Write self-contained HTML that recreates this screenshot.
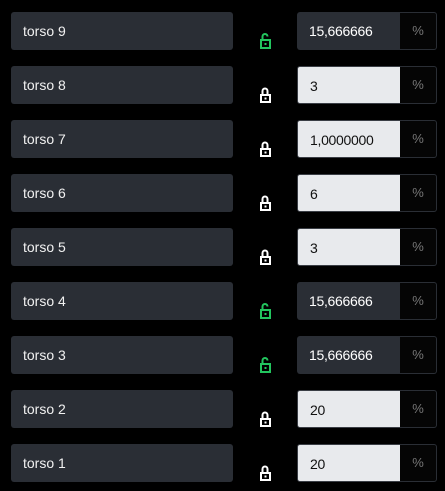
<!DOCTYPE html>
<html><head><style>
html,body{margin:0;padding:0;background:#000;width:445px;height:491px;overflow:hidden;font-family:"Liberation Sans",sans-serif;}
.row{position:absolute;left:0;width:445px;height:38px;}
.name{position:absolute;left:11px;top:0;width:222px;height:38px;background:#2a2e35;border-radius:3px;color:#f1f1f1;font-size:14px;line-height:38px;box-sizing:border-box;padding-left:12px;}
.lock{position:absolute;left:258px;top:19px;width:14px;height:18px;}
.inp{position:absolute;left:297px;top:0;width:104px;height:38px;box-sizing:border-box;border-radius:3px 0 0 3px;font-size:14px;line-height:38px;padding-left:12px;overflow:hidden;white-space:nowrap;}
.inp span{display:inline-block;width:66px;overflow:hidden;vertical-align:top;letter-spacing:-0.3px;}
.light{background:#e8eaed;color:#111;border:1px solid #3a3e45;}
.dark{background:#2a2e35;color:#fff;}
.suf{position:absolute;left:400px;top:0;width:37px;height:38px;box-sizing:border-box;border:1px solid #2a2e35;border-left:none;border-radius:0 3px 3px 0;color:#777;font-size:13px;line-height:36px;text-align:center;background:#050505;}
</style></head><body>
<div class="row" style="top:12px"><div class="name">torso 9</div><svg class="lock" viewBox="0 0 14 18"><path d="M4.5 9V5.5a2.5 2.5 0 0 1 5 0" fill="none" stroke="#22c55e" stroke-width="2"/><rect x="3" y="9" width="9" height="8" fill="none" stroke="#22c55e" stroke-width="2"/><rect x="6.5" y="12" width="2" height="2" fill="#22c55e"/></svg><div class="inp dark"><span>15,666666</span></div><div class="suf">%</div></div>
<div class="row" style="top:66px"><div class="name">torso 8</div><svg class="lock" viewBox="0 0 14 18"><path d="M4.5 10V6a2.5 2.5 0 0 1 5 0V10" fill="none" stroke="#fff" stroke-width="2"/><rect x="3" y="10" width="9" height="7" fill="none" stroke="#fff" stroke-width="2"/><rect x="6.5" y="12.5" width="2" height="2" fill="#fff"/></svg><div class="inp light"><span>3</span></div><div class="suf">%</div></div>
<div class="row" style="top:120px"><div class="name">torso 7</div><svg class="lock" viewBox="0 0 14 18"><path d="M4.5 10V6a2.5 2.5 0 0 1 5 0V10" fill="none" stroke="#fff" stroke-width="2"/><rect x="3" y="10" width="9" height="7" fill="none" stroke="#fff" stroke-width="2"/><rect x="6.5" y="12.5" width="2" height="2" fill="#fff"/></svg><div class="inp light"><span>1,0000000</span></div><div class="suf">%</div></div>
<div class="row" style="top:174px"><div class="name">torso 6</div><svg class="lock" viewBox="0 0 14 18"><path d="M4.5 10V6a2.5 2.5 0 0 1 5 0V10" fill="none" stroke="#fff" stroke-width="2"/><rect x="3" y="10" width="9" height="7" fill="none" stroke="#fff" stroke-width="2"/><rect x="6.5" y="12.5" width="2" height="2" fill="#fff"/></svg><div class="inp light"><span>6</span></div><div class="suf">%</div></div>
<div class="row" style="top:228px"><div class="name">torso 5</div><svg class="lock" viewBox="0 0 14 18"><path d="M4.5 10V6a2.5 2.5 0 0 1 5 0V10" fill="none" stroke="#fff" stroke-width="2"/><rect x="3" y="10" width="9" height="7" fill="none" stroke="#fff" stroke-width="2"/><rect x="6.5" y="12.5" width="2" height="2" fill="#fff"/></svg><div class="inp light"><span>3</span></div><div class="suf">%</div></div>
<div class="row" style="top:282px"><div class="name">torso 4</div><svg class="lock" viewBox="0 0 14 18"><path d="M4.5 9V5.5a2.5 2.5 0 0 1 5 0" fill="none" stroke="#22c55e" stroke-width="2"/><rect x="3" y="9" width="9" height="8" fill="none" stroke="#22c55e" stroke-width="2"/><rect x="6.5" y="12" width="2" height="2" fill="#22c55e"/></svg><div class="inp dark"><span>15,666666</span></div><div class="suf">%</div></div>
<div class="row" style="top:336px"><div class="name">torso 3</div><svg class="lock" viewBox="0 0 14 18"><path d="M4.5 9V5.5a2.5 2.5 0 0 1 5 0" fill="none" stroke="#22c55e" stroke-width="2"/><rect x="3" y="9" width="9" height="8" fill="none" stroke="#22c55e" stroke-width="2"/><rect x="6.5" y="12" width="2" height="2" fill="#22c55e"/></svg><div class="inp dark"><span>15,666666</span></div><div class="suf">%</div></div>
<div class="row" style="top:390px"><div class="name">torso 2</div><svg class="lock" viewBox="0 0 14 18"><path d="M4.5 10V6a2.5 2.5 0 0 1 5 0V10" fill="none" stroke="#fff" stroke-width="2"/><rect x="3" y="10" width="9" height="7" fill="none" stroke="#fff" stroke-width="2"/><rect x="6.5" y="12.5" width="2" height="2" fill="#fff"/></svg><div class="inp light"><span>20</span></div><div class="suf">%</div></div>
<div class="row" style="top:444px"><div class="name">torso 1</div><svg class="lock" viewBox="0 0 14 18"><path d="M4.5 10V6a2.5 2.5 0 0 1 5 0V10" fill="none" stroke="#fff" stroke-width="2"/><rect x="3" y="10" width="9" height="7" fill="none" stroke="#fff" stroke-width="2"/><rect x="6.5" y="12.5" width="2" height="2" fill="#fff"/></svg><div class="inp light"><span>20</span></div><div class="suf">%</div></div>
</body></html>
